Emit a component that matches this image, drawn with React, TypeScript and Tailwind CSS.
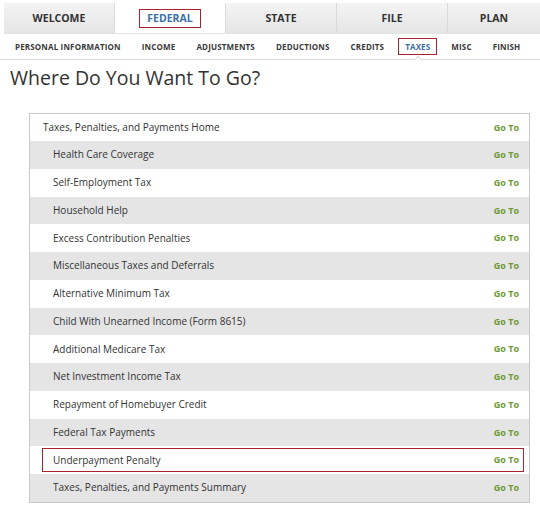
import React from 'react';

const tabs = ['WELCOME', 'FEDERAL', 'STATE', 'FILE', 'PLAN'];
const subTabs = ['PERSONAL INFORMATION', 'INCOME', 'ADJUSTMENTS', 'DEDUCTIONS', 'CREDITS', 'TAXES', 'MISC', 'FINISH'];

const rows = [
  'Health Care Coverage',
  'Self-Employment Tax',
  'Household Help',
  'Excess Contribution Penalties',
  'Miscellaneous Taxes and Deferrals',
  'Alternative Minimum Tax',
  'Child With Unearned Income (Form 8615)',
  'Additional Medicare Tax',
  'Net Investment Income Tax',
  'Repayment of Homebuyer Credit',
  'Federal Tax Payments',
  'Underpayment Penalty',
  'Taxes, Penalties, and Payments Summary',
];

function GoTo() {
  return <span className="text-[9px] font-bold text-[#6d9a32]">Go To</span>;
}

export default function App() {
  return (
    <div className="w-[540px] h-[507px] bg-white text-[#333]" style={{ fontFamily: '"Open Sans", "Liberation Sans", sans-serif' }}>
      {/* Main tabs */}
      <div className="pt-[3px] pl-[4px]">
        <div className="flex h-[31px] bg-gradient-to-b from-[#f4f4f4] to-[#e6e6e6] border-b border-[#e2e2e2]">
          {tabs.map((t, i) => (
            <div
              key={t}
              className={
                'flex items-center justify-center pt-[1px] text-[10.5px] font-bold ' +
                (i < tabs.length - 1 ? 'w-[111px] border-r border-[#dadada] ' : 'flex-1 ') +
                (t === 'FEDERAL' ? 'bg-white' : '')
              }
            >
              {t === 'FEDERAL' ? (
                <span className="border border-[#a8232b] px-[7px] py-[1px] text-[#3c6fa6]">{t}</span>
              ) : (
                t
              )}
            </div>
          ))}
        </div>
      </div>

      {/* Sub tabs */}
      <div className="relative flex items-center h-[26px] pl-[15px] pt-[1px] border-b border-[#dcdcdc] text-[8px] font-bold tracking-[0.02em] text-[#3a3a3a]">
        {subTabs.map((t) => (
          <div key={t} className="mr-[21px] last:mr-0 relative">
            {t === 'TAXES' ? (
              <span className="border border-[#a8232b] px-[6px] py-[2px] -mx-[7px] text-[#3c6fa6]">
                {t}
                <span className="absolute left-1/2 -translate-x-1/2 top-[16px] w-[6px] h-[6px] rotate-45 bg-white border-l border-t border-[#dcdcdc]" />
              </span>
            ) : (
              t
            )}
          </div>
        ))}
      </div>

      <h1 className="mt-[5px] ml-[10px] text-[19.5px] leading-[26px] text-[#333]">Where Do You Want To Go?</h1>

      {/* List */}
      <div className="mt-[22px] ml-[29px] w-[501px] border border-[#c9c9c9]">
        <div className="flex items-center justify-between h-[27px] pl-[13px] pr-[10px] text-[10px] bg-white">
          <span>Taxes, Penalties, and Payments Home</span>
          <GoTo />
        </div>
        {rows.map((r, i) => {
          const gray = i % 2 === 0;
          const selected = r === 'Underpayment Penalty';
          return (
            <div key={r} className={'h-[27.75px] flex items-center ' + (gray ? 'bg-[#e5e5e5]' : 'bg-white')}>
              <div
                className={
                  'flex-1 flex items-center justify-between text-[10px] ' +
                  (selected
                    ? 'ml-[12px] mr-[5px] h-[24px] border border-[#a8232b] pl-[10px] pr-[4px]'
                    : 'h-full pl-[23px] pr-[10px]')
                }
              >
                <span>{r}</span>
                <GoTo />
              </div>
            </div>
          );
        })}
      </div>
    </div>
  );
}
